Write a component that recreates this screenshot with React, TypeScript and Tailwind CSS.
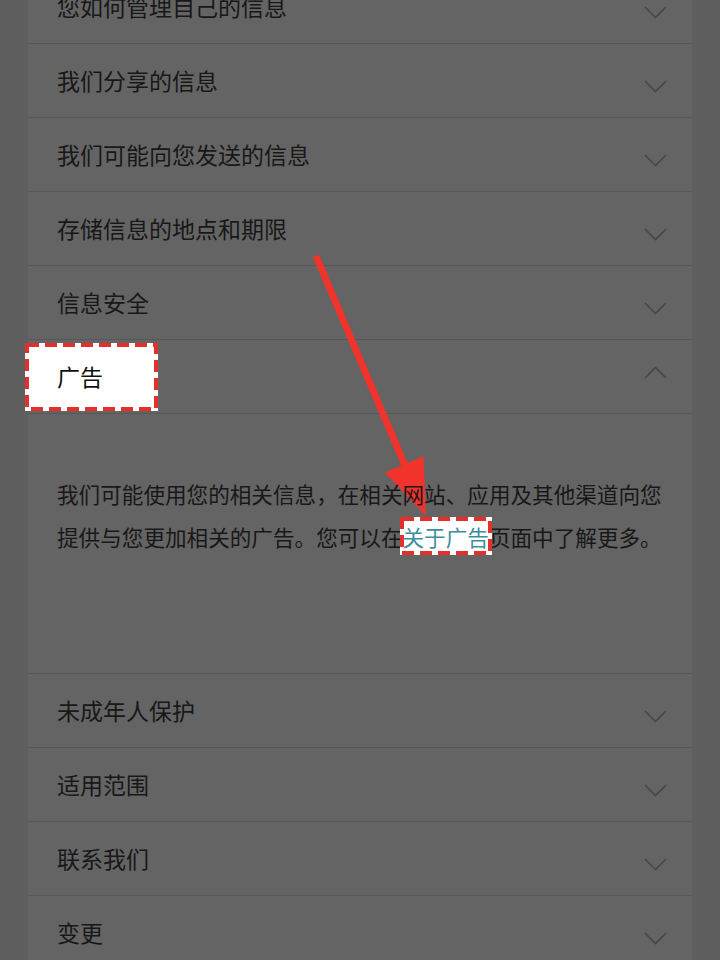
import React from "react";

const topRows = [
  "您如何管理自己的信息",
  "我们分享的信息",
  "我们可能向您发送的信息",
  "存储信息的地点和期限",
  "信息安全",
];

const bottomRows = ["未成年人保护", "适用范围", "联系我们", "变更"];

function Chevron({ up }: { up?: boolean }) {
  return (
    <svg width="23" height="13" viewBox="0 0 23 13" className={up ? "mb-[9px]" : "mt-[11px]"}>
      <path
        d={up ? "M1 12 L11.5 1.5 L22 12" : "M1 1 L11.5 11.5 L22 1"}
        fill="none"
        stroke="#474747"
        strokeWidth="1.6"
      />
    </svg>
  );
}

// red dashed highlight drawn over the screenshot
function DashBox({ w, h }: { w: number; h: number }) {
  return (
    <svg width={w} height={h} viewBox={`0 0 ${w} ${h}`} className="absolute inset-0">
      <rect x="0" y="0" width={w} height={h} fill="#ffffff" />
      <rect
        x="2"
        y="2"
        width={w - 4}
        height={h - 4}
        fill="none"
        stroke="#e3302d"
        strokeWidth="4"
        strokeDasharray="12 6"
      />
    </svg>
  );
}

function Row({ title }: { title: string }) {
  return (
    <div className="flex h-[74px] items-center justify-between border-b border-[#585858] pl-[29px] pr-[25px]">
      <span className="text-[23px] text-[#181818]">{title}</span>
      <Chevron />
    </div>
  );
}

export default function App() {
  return (
    <div
      className="relative h-[960px] w-[720px] overflow-hidden bg-[#5e5e5e] px-[28px]"
      style={{ fontFamily: '"Noto Sans CJK SC", "Noto Sans", sans-serif' }}
    >
      <div className="-mt-[30px] bg-[#646464]">
        {topRows.map((t) => (
          <Row key={t} title={t} />
        ))}

        {/* 展开的一项 */}
        <div className="flex h-[74px] items-center justify-between border-b border-[#585858] pl-[29px] pr-[25px]">
          <div className="relative">
            <div className="absolute left-[-32px] top-[-16px] h-[68px] w-[133px]">
              <DashBox w={133} h={68} />
            </div>
            <span className="relative text-[23px] text-[#111111]">广告</span>
          </div>
          <Chevron up />
        </div>

        <div className="h-[260px] border-b border-[#585858] pl-[29px] pr-[20px] pt-[59px]">
          <p className="relative z-20 text-[21.6px] leading-[42.5px] text-[#181818]">
            我们可能使用您的相关信息，在相关网站、应用及其他渠道向您提供与您更加相关的广告。您可以在
            <span className="relative">
              <span className="absolute left-[-3px] top-[-4px] h-[38px] w-[92px]">
                <DashBox w={92} h={38} />
              </span>
              <span className="relative text-[#3d8e9c]">关于广告</span>
            </span>
            页面中了解更多。
          </p>
        </div>

        {bottomRows.map((t) => (
          <Row key={t} title={t} />
        ))}
      </div>

      <svg
        width="720"
        height="960"
        viewBox="0 0 720 960"
        className="pointer-events-none absolute left-0 top-0 z-10"
      >
        <line x1="316" y1="256" x2="406" y2="468" stroke="#f0332b" strokeWidth="7" />
        <polygon points="426,516 423.5,456.2 384.9,472.6" fill="#f0332b" />
      </svg>
    </div>
  );
}
